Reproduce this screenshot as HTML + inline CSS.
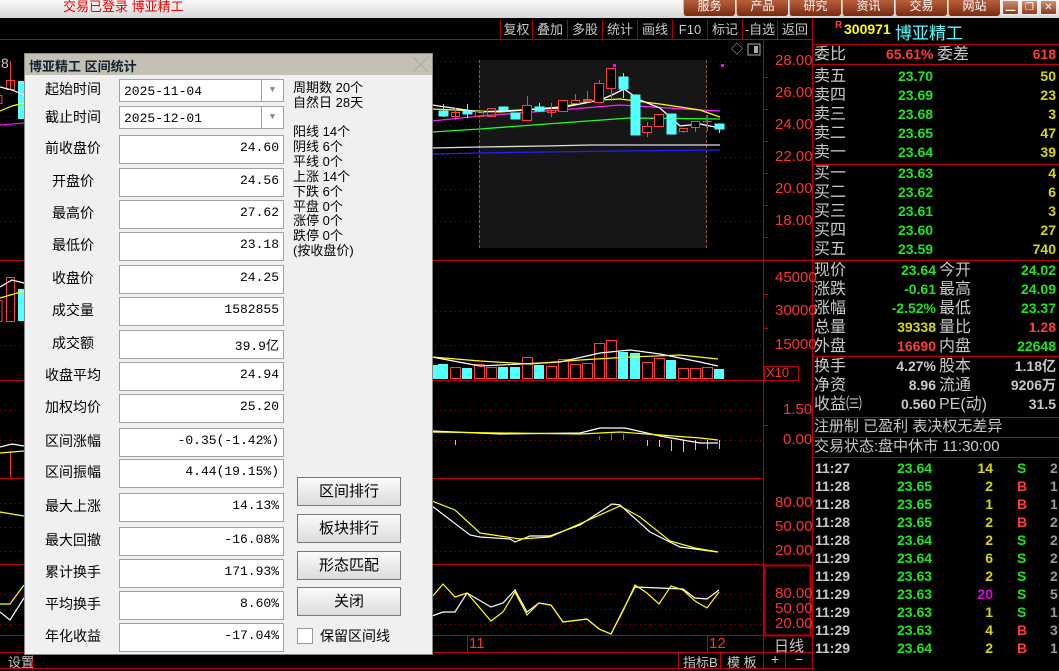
<!DOCTYPE html>
<html><head><meta charset="utf-8">
<style>
*{margin:0;padding:0;box-sizing:border-box}
body{width:1059px;height:670px;background:#000;overflow:hidden;position:relative;font-family:"Liberation Sans","Noto Sans CJK SC",sans-serif;}
.a{position:absolute;white-space:nowrap}
.top{left:0;top:0;width:1059px;height:18px;background:linear-gradient(#fafafa,#d6d6d6);}
.tab{position:absolute;top:0;height:16px;width:52px;background:linear-gradient(#b8603c,#7a2a10);color:#fff;font-size:12px;text-align:center;line-height:12px;border-left:1px solid #e0b090;border-radius:0 0 3px 3px}
.wb{position:absolute;top:0;width:17px;height:15px;background:linear-gradient(#d09070,#8a3a1a);border:1px solid #eee;border-radius:2px;color:#fff;font-size:10px;text-align:center;line-height:13px}
.tb{position:absolute;top:20px;height:19px;color:#c8c8c8;font-size:13px;line-height:19px;text-align:center;border-left:1px solid #a00}
.r{color:#ff3c3c}.g{color:#1ee61e}.y{color:#d8d800}.w{color:#c8c8c8}.c{color:#54ffff}.m{color:#e000e0}
.rp{font-size:16px;line-height:19px}
.lbl{position:absolute;left:28px;width:90px;text-align:center;font-size:14px;color:#000}
.box{position:absolute;left:119px;width:165px;height:29px;background:#fff;border:1px solid #a0a0a0;font-family:"Liberation Mono",monospace;font-size:13px;text-align:right;padding:4px 4px 0 0;color:#000}
.btn{position:absolute;left:297px;width:104px;height:29px;background:linear-gradient(#fafafa,#dcdcdc);border:1px solid #7a7a7a;font-size:15px;text-align:center;line-height:27px;color:#000}
.ax{position:absolute;left:775px;color:#ff3232;font-size:15px;font-family:"Liberation Sans",sans-serif}
</style></head><body>
<div class="a top"></div>
<div class="a" style="left:63px;top:-4px;color:#e00;font-size:13px">交易已登录 博亚精工</div>
<div class="tab" style="left:683px">服务</div><div class="tab" style="left:736px">产品</div><div class="tab" style="left:789px">研究</div><div class="tab" style="left:842px">资讯</div><div class="tab" style="left:895px">交易</div><div class="tab" style="left:948px">网站</div>
<div class="wb" style="left:1002px">▁</div><div class="wb" style="left:1021px">❐</div><div class="wb" style="left:1040px">✕</div>

<svg class="a" style="left:0;top:0" width="1059" height="670">
<g stroke="#c00000" stroke-width="1" fill="none">
<line x1="0" y1="39.5" x2="812" y2="39.5"/>
<line x1="763.5" y1="40" x2="763.5" y2="670"/>
<line x1="812.5" y1="18" x2="812.5" y2="670"/>
<line x1="0" y1="260.5" x2="1059" y2="260.5"/>
<line x1="0" y1="380.5" x2="763" y2="380.5"/>
<line x1="0" y1="478.5" x2="763" y2="478.5"/>
<line x1="0" y1="564.5" x2="763" y2="564.5"/>
<line x1="0" y1="635.5" x2="812" y2="635.5"/>
<line x1="0" y1="652.5" x2="812" y2="652.5"/>
<line x1="0" y1="668.5" x2="812" y2="668.5"/>
<line x1="812" y1="44.5" x2="1059" y2="44.5"/>
<line x1="812" y1="64.5" x2="1059" y2="64.5"/>
<line x1="812" y1="164.5" x2="1059" y2="164.5"/>
<line x1="812" y1="356.5" x2="1059" y2="356.5"/>
<line x1="812" y1="417.5" x2="1059" y2="417.5"/>
<line x1="812" y1="437.5" x2="1059" y2="437.5"/>
<line x1="812" y1="457.5" x2="1059" y2="457.5"/>
<line x1="467.5" y1="636" x2="467.5" y2="652"/>
<line x1="707.5" y1="636" x2="707.5" y2="652"/>
<line x1="678.5" y1="652" x2="678.5" y2="668"/><line x1="720.5" y1="652" x2="720.5" y2="668"/><line x1="785.5" y1="652" x2="785.5" y2="668"/><line x1="32.5" y1="652" x2="32.5" y2="668"/>
<rect x="764.5" y="565.5" width="46" height="70" stroke-width="2"/>
<rect x="764.5" y="366.5" width="34" height="14"/>
</g>
<g stroke="#a00000" stroke-dasharray="1,4" stroke-width="1">
<line x1="0" y1="61.5" x2="763" y2="61.5"/><line x1="0" y1="93.5" x2="763" y2="93.5"/><line x1="0" y1="125.5" x2="763" y2="125.5"/><line x1="0" y1="157.5" x2="763" y2="157.5"/><line x1="0" y1="189.5" x2="763" y2="189.5"/><line x1="0" y1="221.5" x2="763" y2="221.5"/>
<line x1="0" y1="311.5" x2="763" y2="311.5"/><line x1="0" y1="345.5" x2="763" y2="345.5"/>
<line x1="0" y1="410.5" x2="763" y2="410.5"/><line x1="0" y1="440.5" x2="763" y2="440.5"/>
<line x1="0" y1="503.5" x2="763" y2="503.5"/><line x1="0" y1="527.5" x2="763" y2="527.5"/><line x1="0" y1="551.5" x2="763" y2="551.5"/>
<line x1="0" y1="594.5" x2="763" y2="594.5"/><line x1="0" y1="609.5" x2="763" y2="609.5"/><line x1="0" y1="624.5" x2="763" y2="624.5"/>
</g>
<g stroke="#c00000"><line x1="763" y1="77.5" x2="768" y2="77.5"/><line x1="763" y1="109.5" x2="768" y2="109.5"/><line x1="763" y1="141.5" x2="768" y2="141.5"/><line x1="763" y1="173.5" x2="768" y2="173.5"/><line x1="763" y1="205.5" x2="768" y2="205.5"/><line x1="763" y1="237.5" x2="768" y2="237.5"/><line x1="763" y1="294.5" x2="768" y2="294.5"/><line x1="763" y1="328.5" x2="768" y2="328.5"/><line x1="763" y1="425.5" x2="768" y2="425.5"/></g>
<rect x="479" y="60" width="228" height="188" fill="#161616"/>
<g stroke="#8a5a40" stroke-dasharray="3,2"><line x1="479.5" y1="60" x2="479.5" y2="248"/><line x1="706.5" y1="60" x2="706.5" y2="248"/></g>
<g fill="none" stroke-width="1.3">
<polyline stroke="#e0e0e0" points="432,148 480,147 545,146 590,145 720,145"/>
<polyline stroke="#2020ff" points="432,154 480,153 545,152 620,151 720,150"/>
<polyline stroke="#20ff20" points="432,132 480,129 560,123 630,118 720,119"/>
<polyline stroke="#ff20ff" points="432,121 480,116 560,110 620,105 700,110 720,111"/>
<polyline stroke="#ffff00" points="432,109 500,112 560,107 600,100 620,99 660,104 700,110 720,117"/>
<polyline stroke="#ffffff" points="432,105 480,112 560,108 600,100 612,95 624,89 640,100 660,108 680,126 700,124 720,128"/>
</g>
<g stroke-width="1">
<g stroke="#ff3c3c" fill="none">
<line x1="455.5" y1="108" x2="455.5" y2="120"/><rect x="451.5" y="112.5" width="8" height="4"/>
<rect x="475.5" y="111.5" width="8" height="5"/>
<rect x="487.5" y="108.5" width="8" height="8"/>
<line x1="527.5" y1="96" x2="527.5" y2="120"/><rect x="522.5" y="105.5" width="9" height="15" fill="#000"/>
<line x1="551.5" y1="103" x2="551.5" y2="117"/><rect x="547.5" y="110.5" width="8" height="2"/>
<rect x="558.5" y="100.5" width="9" height="11" fill="#000"/>
<line x1="575.5" y1="94" x2="575.5" y2="103"/><rect x="571.5" y="100.5" width="8" height="3" fill="#000"/>
<line x1="587.5" y1="91" x2="587.5" y2="101"/><rect x="583.5" y="99.5" width="8" height="2" fill="#ff3c3c"/>
<line x1="599.5" y1="80" x2="599.5" y2="102"/><rect x="594.5" y="83.5" width="9" height="19" fill="#000"/>
<line x1="611.5" y1="68" x2="611.5" y2="101"/><rect x="606.5" y="68.5" width="9" height="20" fill="#000"/>
<line x1="647.5" y1="122" x2="647.5" y2="137"/><rect x="642.5" y="126.5" width="9" height="6" fill="#000"/>
<rect x="654.5" y="114.5" width="9" height="12" fill="#000"/>
<line x1="683.5" y1="128" x2="683.5" y2="133"/><rect x="679.5" y="128.5" width="8" height="3" fill="#000"/>
<line x1="695.5" y1="121" x2="695.5" y2="132"/><rect x="691.5" y="121.5" width="8" height="6" fill="#000"/>
<line x1="707.5" y1="115" x2="707.5" y2="131"/><line x1="703" y1="121.5" x2="712" y2="121.5"/>
</g>
<g stroke="#54ffff" fill="#54ffff">
<line x1="443.5" y1="104" x2="443.5" y2="117"/><rect x="439" y="111" width="9" height="5"/>
<line x1="467.5" y1="104" x2="467.5" y2="118"/><rect x="463" y="111" width="9" height="3"/>
<rect x="499" y="107" width="9" height="3"/>
<rect x="511" y="113" width="9" height="6"/>
<line x1="539.5" y1="103" x2="539.5" y2="112"/><rect x="535" y="107" width="9" height="4"/>
<line x1="623.5" y1="73" x2="623.5" y2="98"/><rect x="619" y="77" width="9" height="12"/>
<rect x="631" y="95" width="9" height="40"/>
<rect x="667" y="114" width="9" height="20"/>
<line x1="719.5" y1="124" x2="719.5" y2="133"/><rect x="715" y="124" width="9" height="5"/>
</g>
<rect x="613" y="64" width="3" height="3" fill="#ff00ff"/><rect x="721" y="64" width="3" height="3" fill="#ff00ff"/>
</g>
<text x="731" y="53" fill="#bbb" font-size="12">◇</text>
<rect x="748" y="44" width="12" height="11" fill="none" stroke="#aaa"/><rect x="754" y="46" width="4" height="7" fill="#aaa"/>
<text x="1" y="68" fill="#c8c8c8" font-size="14">8</text>
<g fill="none" stroke="#ff3c3c"><line x1="10.5" y1="61" x2="10.5" y2="90"/><rect x="6.5" y="80.5" width="8" height="9"/><rect x="-2" y="95.5" width="4" height="8"/><rect x="6.5" y="277.5" width="8" height="44"/><rect x="-2" y="300.5" width="4" height="21"/><line x1="10.5" y1="451" x2="10.5" y2="477"/></g>
<rect x="18" y="81" width="6" height="38" fill="#54ffff"/><rect x="18" y="289" width="6" height="32" fill="#54ffff"/>
<g fill="none" stroke-width="1.2"><polyline stroke="#fff" points="0,87 12,90 24,95"/><polyline stroke="#ff0" points="0,111 12,106 24,103"/><polyline stroke="#f0f" points="0,125 24,123"/><polyline stroke="#fff" points="0,287 12,280 24,283"/><polyline stroke="#ff0" points="0,298 24,291"/><polyline stroke="#fff" points="0,447 12,444 24,446"/><polyline stroke="#ff0" points="0,453 24,451"/><polyline stroke="#ff0" points="0,512 24,516"/><polyline stroke="#ff0" points="0,604 10,604 24,585"/><polyline stroke="#fff" points="0,612 10,620 24,598"/></g>
<g stroke="#ff3c3c" fill="none">
<rect x="450.5" y="367.5" width="10" height="11"/><rect x="474.5" y="364.5" width="10" height="14"/><rect x="486.5" y="367.5" width="10" height="11"/><rect x="522.5" y="357.5" width="10" height="21"/><rect x="546.5" y="366.5" width="10" height="12"/><rect x="558.5" y="359.5" width="10" height="19"/><rect x="570.5" y="364.5" width="10" height="14"/><rect x="582.5" y="363.5" width="10" height="15"/><rect x="594.5" y="343.5" width="10" height="35"/><rect x="606.5" y="340.5" width="10" height="38"/><rect x="642.5" y="362.5" width="10" height="16"/><rect x="654.5" y="358.5" width="10" height="20"/><rect x="678.5" y="368.5" width="10" height="10"/><rect x="690.5" y="368.5" width="10" height="10"/><rect x="702.5" y="367.5" width="10" height="11"/>
</g>
<g fill="#54ffff"><rect x="432" y="365" width="6" height="14"/><rect x="438" y="364" width="10" height="15"/><rect x="462" y="368" width="10" height="11"/><rect x="498" y="367" width="10" height="12"/><rect x="510" y="367" width="10" height="12"/><rect x="534" y="365" width="10" height="14"/><rect x="618" y="352" width="10" height="27"/><rect x="630" y="353" width="10" height="26"/><rect x="666" y="360" width="10" height="19"/><rect x="714" y="369" width="10" height="10"/></g>
<g fill="none" stroke-width="1.2"><polyline stroke="#fff" points="432,357 480,366 560,362 600,353 630,350 660,354 700,362 718,366"/><polyline stroke="#ff0" points="432,357 480,361 530,364 580,360 630,357 680,355 718,359"/></g>
<g stroke="#ff3c3c"><line x1="599.5" y1="436" x2="599.5" y2="440"/><line x1="611.5" y1="432" x2="611.5" y2="440"/><line x1="623.5" y1="434" x2="623.5" y2="440"/></g>
<g stroke="#54ffff"><line x1="647.5" y1="440" x2="647.5" y2="446"/><line x1="659.5" y1="440" x2="659.5" y2="447"/><line x1="671.5" y1="440" x2="671.5" y2="451"/><line x1="683.5" y1="440" x2="683.5" y2="452"/><line x1="695.5" y1="440" x2="695.5" y2="450"/><line x1="707.5" y1="440" x2="707.5" y2="449"/><line x1="719.5" y1="440" x2="719.5" y2="449"/><line x1="455.5" y1="440" x2="455.5" y2="445"/></g>
<g fill="none" stroke-width="1.2"><polyline stroke="#fff" points="432,431 500,434 580,433 600,428 625,428 660,436 700,443 718,443"/><polyline stroke="#ff0" points="432,432 580,434 620,432 700,438 718,440"/></g>
<g fill="none" stroke-width="1.2"><polyline stroke="#fff" points="432,506 470,535 480,537 510,539 515,542 530,536 550,536 580,525 612,504 620,505 650,532 680,547 710,551 718,552"/><polyline stroke="#ff0" points="432,501 455,510 480,533 520,539 550,537 620,506 640,517 670,541 695,548 718,552"/>
<polyline stroke="#fff" points="432,616 443,612 455,612 467,593 491,607 503,603 515,590 527,612 539,603 551,605 563,622 587,619 599,629 611,634 623,610 635,587 683,589 695,598 707,599 719,590"/>
<polyline stroke="#ff0" points="432,597 443,584 455,597 467,593 491,621 503,612 515,592 527,615 539,603 551,605 563,622 587,619 599,629 611,634 623,611 635,585 647,593 659,604 671,586 683,590 695,601 707,608 719,592"/></g>
</svg>

<div class="tb" style="left:500px;width:32px">复权</div><div class="tb" style="left:532px;width:35px">叠加</div><div class="tb" style="left:567px;width:35px">多股</div><div class="tb" style="left:602px;width:35px">统计</div><div class="tb" style="left:637px;width:35px">画线</div><div class="tb" style="left:672px;width:35px">F10</div><div class="tb" style="left:707px;width:35px">标记</div><div class="tb" style="left:742px;width:35px">-自选</div><div class="tb" style="left:777px;width:35px">返回</div>

<div class="ax" style="top:52px">28.00</div><div class="ax" style="top:84px">26.00</div><div class="ax" style="top:116px">24.00</div><div class="ax" style="top:148px">22.00</div><div class="ax" style="top:180px">20.00</div><div class="ax" style="top:212px">18.00</div>
<div class="ax" style="top:269px">45000</div><div class="ax" style="top:302px">30000</div><div class="ax" style="top:336px">15000</div><div class="ax" style="left:766px;top:365px;font-size:13px">X10</div>
<div class="ax" style="top:401px;left:783px">1.50</div><div class="ax" style="top:431px;left:783px">0.00</div>
<div class="ax" style="top:494px">80.00</div><div class="ax" style="top:518px">50.00</div><div class="ax" style="top:542px">20.00</div>
<div class="ax" style="top:585px">80.00</div><div class="ax" style="top:600px">50.00</div><div class="ax" style="top:615px">20.00</div>
<div class="ax" style="top:635px;left:774px;color:#c8c8c8">日线</div>
<div class="ax" style="top:635px;left:469px">11</div><div class="ax" style="top:635px;left:709px">12</div>
<div class="a w" style="left:683px;top:652px;font-size:13px">指标B</div><div class="a w" style="left:727px;top:652px;font-size:13px">模 板</div><div class="a w" style="left:771px;top:651px;font-size:14px">+</div><div class="a w" style="left:795px;top:651px;font-size:14px">−</div>
<div class="a w" style="left:8px;top:652px;font-size:13px">设置</div>

<div class="a r" style="left:835px;top:20px;font-size:10px;font-weight:bold">R</div>
<div class="a" style="left:844px;top:21px;color:#ffff00;font-size:14px;font-weight:bold">300971</div>
<div class="a c" style="left:895px;top:19px;font-size:17px">博亚精工</div>
<div class="a w rp" style="left:814px;top:45px">委比</div><div class="a r rp" style="left:886px;top:45px;font-weight:bold;font-size:14px">65.61%</div><div class="a w rp" style="left:937px;top:45px">委差</div><div class="a r rp" style="right:3px;top:45px;font-weight:bold;font-size:14px">618</div>
<div class="a w rp" style="left:814px;top:67px">卖五<br>卖四<br>卖三<br>卖二<br>卖一</div>
<div class="a g rp" style="left:898px;top:67px;font-weight:bold;font-size:14px">23.70<br>23.69<br>23.68<br>23.65<br>23.64</div>
<div class="a y rp" style="right:3px;top:67px;font-weight:bold;font-size:14px;text-align:right">50<br>23<br>3<br>47<br>39</div>
<div class="a w rp" style="left:814px;top:164px">买一<br>买二<br>买三<br>买四<br>买五</div>
<div class="a g rp" style="left:898px;top:164px;font-weight:bold;font-size:14px">23.63<br>23.62<br>23.61<br>23.60<br>23.59</div>
<div class="a y rp" style="right:3px;top:164px;font-weight:bold;font-size:14px;text-align:right">4<br>6<br>3<br>27<br>740</div>
<div class="a w rp" style="left:814px;top:261px">现价<br>涨跌<br>涨幅<br>总量<br>外盘</div>
<div class="a rp" style="right:123px;top:261px;font-weight:bold;font-size:14px;text-align:right"><span class="g">23.64</span><br><span class="g">-0.61</span><br><span class="g">-2.52%</span><br><span class="y">39338</span><br><span class="r">16690</span></div>
<div class="a w rp" style="left:939px;top:261px">今开<br>最高<br>最低<br>量比<br>内盘</div>
<div class="a rp" style="right:3px;top:261px;font-weight:bold;font-size:14px;text-align:right"><span class="g">24.02</span><br><span class="g">24.09</span><br><span class="g">23.37</span><br><span class="r">1.28</span><br><span class="g">22648</span></div>
<div class="a w rp" style="left:814px;top:357px">换手<br>净资<br>收益㈢</div>
<div class="a w rp" style="right:123px;top:357px;font-weight:bold;font-size:14px;text-align:right">4.27%<br>8.96<br>0.560</div>
<div class="a w rp" style="left:939px;top:357px">股本<br>流通<br>PE(动)</div>
<div class="a w rp" style="right:3px;top:357px;font-weight:bold;font-size:14px;text-align:right">1.18亿<br>9206万<br>31.5</div>
<div class="a w rp" style="left:814px;top:417px;font-size:15px">注册制 已盈利 表决权无差异</div>
<div class="a w rp" style="left:814px;top:437px;font-size:15px">交易状态:盘中休市 11:30:00</div>
<div class="a w" style="left:815px;top:459px;font-size:14px;font-weight:bold;line-height:18px">11:27<br>11:28<br>11:28<br>11:28<br>11:28<br>11:29<br>11:29<br>11:29<br>11:29<br>11:29<br>11:29</div>
<div class="a g" style="left:897px;top:459px;font-size:14px;font-weight:bold;line-height:18px">23.64<br>23.65<br>23.65<br>23.65<br>23.64<br>23.64<br>23.63<br>23.63<br>23.63<br>23.63<br>23.64</div>
<div class="a y" style="right:66px;top:459px;font-size:14px;font-weight:bold;line-height:18px;text-align:right">14<br>2<br>1<br>2<br>2<br>6<br>2<br><span class="m">20</span><br>1<br>4<br>2</div>
<div class="a" style="left:1017px;top:459px;font-size:14px;font-weight:bold;line-height:18px"><span class="g">S</span><br><span class="r">B</span><br><span class="r">B</span><br><span class="r">B</span><br><span class="g">S</span><br><span class="g">S</span><br><span class="g">S</span><br><span class="g">S</span><br><span class="g">S</span><br><span class="r">B</span><br><span class="r">B</span></div>
<div class="a" style="left:1050px;top:459px;font-size:14px;font-weight:bold;line-height:18px;color:#999">2<br>1<br>1<br>2<br>2<br>2<br>2<br>5<br>1<br>3<br>1</div>

<div class="a" style="left:24px;top:53px;width:409px;height:602px;background:#f0f0f0;border:1px solid #888">
<div style="height:21px;background:#c4c0b4;font-size:13px;font-weight:bold;color:#102030;padding:2px 0 0 4px">博亚精工 区间统计<span style="position:absolute;right:4px;top:0;color:#999;font-weight:normal;font-size:15px">╳</span></div>
</div>
<div class="lbl" style="top:79px">起始时间</div><div class="lbl" style="top:107px">截止时间</div>
<div class="box" style="top:79px;height:23px;text-align:left;padding:4px 0 0 4px">2025-11-04<span style="position:absolute;right:0;top:0;width:22px;height:21px;border-left:1px solid #a0a0a0;color:#888;font-size:9px;text-align:center;line-height:21px">▼</span></div>
<div class="box" style="top:106px;height:23px;text-align:left;padding:4px 0 0 4px">2025-12-01<span style="position:absolute;right:0;top:0;width:22px;height:21px;border-left:1px solid #a0a0a0;color:#888;font-size:9px;text-align:center;line-height:21px">▼</span></div>
<div class="lbl" style="top:138px">前收盘价</div><div class="box" style="top:135px">24.60</div>
<div class="lbl" style="top:171px">开盘价</div><div class="box" style="top:168px">24.56</div>
<div class="lbl" style="top:203px">最高价</div><div class="box" style="top:200px">27.62</div>
<div class="lbl" style="top:235px">最低价</div><div class="box" style="top:232px">23.18</div>
<div class="lbl" style="top:268px">收盘价</div><div class="box" style="top:265px">24.25</div>
<div class="lbl" style="top:300px">成交量</div><div class="box" style="top:297px">1582855</div>
<div class="lbl" style="top:333px">成交额</div><div class="box" style="top:330px">39.9亿</div>
<div class="lbl" style="top:365px">收盘平均</div><div class="box" style="top:362px">24.94</div>
<div class="lbl" style="top:397px">加权均价</div><div class="box" style="top:394px">25.20</div>
<div class="lbl" style="top:431px">区间涨幅</div><div class="box" style="top:428px">-0.35(-1.42%)</div>
<div class="lbl" style="top:462px">区间振幅</div><div class="box" style="top:459px">4.44(19.15%)</div>
<div class="lbl" style="top:496px">最大上涨</div><div class="box" style="top:493px">14.13%</div>
<div class="lbl" style="top:530px">最大回撤</div><div class="box" style="top:527px">-16.08%</div>
<div class="lbl" style="top:562px">累计换手</div><div class="box" style="top:559px">171.93%</div>
<div class="lbl" style="top:594px">平均换手</div><div class="box" style="top:591px">8.60%</div>
<div class="lbl" style="top:626px">年化收益</div><div class="box" style="top:623px">-17.04%</div>
<div class="a" style="left:293px;top:80px;font-size:13px;line-height:15px;color:#000">周期数 20个<br>自然日 28天</div>
<div class="a" style="left:293px;top:125px;font-size:13px;line-height:14.9px;color:#000">阳线 14个<br>阴线 6个<br>平线 0个<br>上涨 14个<br>下跌 6个<br>平盘 0个<br>涨停 0个<br>跌停 0个<br>(按收盘价)</div>
<div class="btn" style="top:477px">区间排行</div><div class="btn" style="top:514px">板块排行</div><div class="btn" style="top:551px">形态匹配</div><div class="btn" style="top:587px">关闭</div>
<div class="a" style="left:297px;top:628px;width:16px;height:16px;background:#fff;border:1px solid #999"></div>
<div class="a" style="left:320px;top:626px;font-size:14px;color:#000">保留区间线</div>
</body></html>
